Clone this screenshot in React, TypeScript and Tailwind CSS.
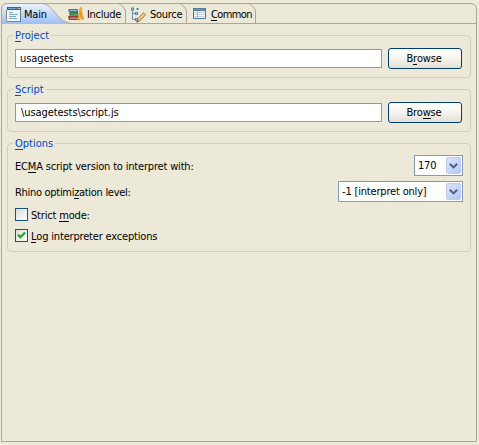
import type { ReactNode } from "react";

function U({ children }: { children: ReactNode }) {
  return <span className="shadow-[0_1px_0_currentColor] inline-block h-[12px] leading-[13px]">{children}</span>;
}

function MainIcon() {
  return (
    <svg width="16" height="16" viewBox="0 0 16 16" shapeRendering="crispEdges">
      <rect x="1" y="0" width="14" height="4" fill="#2f6496" />
      <rect x="2" y="1" width="9" height="1" fill="#6fa0cc" />
      <rect x="12" y="1" width="2" height="1" fill="#e8c878" />
      <rect x="0" y="3" width="15" height="12" fill="#8b8a68" />
      <rect x="1" y="3" width="13" height="11" fill="#f5faff" />
      <rect x="14" y="4" width="1" height="11" fill="#557da8" />
      <path d="M3 5.5h4M3 7.5h9M3 9.5h7M3 11.5h8" stroke="#7ba5d8" />
    </svg>
  );
}

function BooksIcon() {
  return (
    <svg width="16" height="14" viewBox="0 0 16 14">
      <path d="M0 3.5 1 2h9v3H1Z" fill="#3f7ea8" />
      <path d="M2 3.5h7" stroke="#cfe1e8" strokeWidth=".6" />
      <path d="M1 6 2 5h8v3.5H2Z" fill="#347b51" />
      <path d="M3 7.2h7" stroke="#8dbd92" strokeWidth=".6" />
      <path d="M0 9.5 1 8.5h10V13H1Z" fill="#963f36" />
      <path d="M2 11.2h8" stroke="#efb59b" strokeWidth=".9" />
      <path d="m9.8 12 2.4-11.5L14 1l-2 12h-1.5Z" fill="#f6b62c" stroke="#d48a1a" strokeWidth=".6" />
      <path d="m12.2 5 1.4-.6 2 7.6-1.4.8Z" fill="#f2a62c" stroke="#d48a1a" strokeWidth=".6" />
    </svg>
  );
}

function SourceIcon() {
  return (
    <svg width="16" height="16" viewBox="0 0 16 16">
      <path d="M1.5 3v9.5H5M1.5 6.5H5" fill="none" stroke="#6f8eb6" />
      <path d="M0 .5h3v3H0ZM4 5h3v3H4ZM4 11h3v3H4ZM5.5 1h2v2h-2Z" fill="#5a82b4" />
      <path d="M1 1.5h1v1H1ZM5 6h1v1H5ZM5 12h1v1H5Z" fill="#b9cee6" />
      <path d="m7 11.5 5.5-5.8 2.2 2L9 13.7l-3 1.3Z" fill="#e6bd76" stroke="#9a6a34" strokeWidth=".8" />
      <path d="m8 12 5.2-5.3" stroke="#fae5b4" strokeWidth=".8" />
      <path d="m5.5 15.5.8-2 1.3 1.3Z" fill="#4c4540" />
    </svg>
  );
}

function TableIcon() {
  return (
    <svg width="13" height="11" viewBox="0 0 13 11" shapeRendering="crispEdges">
      <rect width="13" height="11" fill="#56779f" />
      <rect x="1" y="1" width="11" height="1" fill="#7592b8" />
      <rect x="1" y="3" width="11" height="7" fill="#fff" />
      <path d="M1 4.5h11M1 6.5h11M1 8.5h11" stroke="#c5d3e6" />
      <path d="M4.5 3v7" stroke="#a9bcd6" />
    </svg>
  );
}

function ActiveShape() {
  return (
    <svg className="absolute -left-px -top-px" width="74" height="22" viewBox="0 0 74 22">
      <defs>
        <linearGradient id="tabfill" x1="0" y1="0" x2="0" y2="1">
          <stop offset="0" stopColor="#eef3fc" />
          <stop offset="1" stopColor="#9dbef8" />
        </linearGradient>
      </defs>
      <path d="M0 21V6Q1 1 6 .5H40C54 .5 55 20.5 72 20.5V21Z" fill="url(#tabfill)" />
      <path d="M.5 21V6Q1 .5 6 .5H40C54 .5 55 20.5 72 20.5" fill="none" stroke="#aca899" />
    </svg>
  );
}

function TabEdge() {
  return (
    <svg className="absolute -top-px right-0" width="9" height="21" viewBox="0 0 9 21">
      <path d="M0 .5H1Q4 1 6 3.5T8.5 8V21" fill="none" stroke="#aca899" />
    </svg>
  );
}

function Group({ title, className, children }: { title: ReactNode; className: string; children: ReactNode }) {
  return (
    <fieldset className={"relative box-border w-[464px] rounded-[4px] border border-[#d0d0bf] " + className}>
      <span className="absolute left-[5px] -top-[7px] h-[14px] bg-[#ece9d8] px-[2px] leading-[13px] tracking-normal text-[#0046d5]">
        {title}
      </span>
      {children}
    </fieldset>
  );
}

function Field({ value, button, pad }: { value: string; button: ReactNode; pad: string }) {
  return (
    <div className="flex items-center pl-[7px] pt-[12px]">
      <div className={"h-[19px] w-[367px] border border-[#7f9db9] bg-white leading-[17px] tracking-[-0.08px] " + pad}>{value}</div>
      <button className="ml-[6px] flex h-[21px] w-[74px] items-center justify-center rounded-[3px] border border-[#003c74] bg-linear-to-b from-white via-[#f5f4ee] to-[#e3dfd3] pb-px pr-[2px]">
        <span>{button}</span>
      </button>
    </div>
  );
}

function Combo({ value, width }: { value: ReactNode; width: string }) {
  return (
    <div className={"flex h-[21px] items-center border border-[#7f9db9] bg-white p-px " + width}>
      <span className="grow pl-[2px]">{value}</span>
      <span className="flex h-[17px] w-[15px] items-center justify-center rounded-[2px] border border-[#bccbf4] bg-linear-to-br from-[#dbe5fe] to-[#b4c8f6]">
        <svg width="9" height="6" viewBox="0 0 9 6">
          <path d="m.8.8 3.7 3.6L8.2.8" fill="none" stroke="#4d6185" strokeWidth="2" />
        </svg>
      </span>
    </div>
  );
}

function Check({ checked, children }: { checked?: boolean; children: ReactNode }) {
  return (
    <div className="flex h-[13px] items-center">
      <span className="flex size-[13px] items-center justify-center border border-[#1c5180] bg-linear-to-br from-[#dcdcd7] to-white">
        {checked && (
          <svg width="9" height="9" viewBox="0 0 9 9">
            <path d="M1 3.7 3.4 6.2 8 1.5" fill="none" stroke="#21a121" strokeWidth="2.2" />
          </svg>
        )}
      </span>
      <span className="ml-[3px] pt-px">{children}</span>
    </div>
  );
}

export default function App() {
  return (
    <div className="h-[445px] w-[479px] overflow-hidden whitespace-nowrap bg-[#ece9d8] pl-px pt-[3px] font-['DejaVu_Sans_Condensed','DejaVu_Sans',sans-serif] text-[11px] leading-[13px] tracking-[-0.18px] text-black [font-stretch:condensed]">
      <div className="h-[439px] w-[476px] rounded-t-[6px] border border-[#aca899]">
        <div className="flex h-[20px] border-b border-[#aca899]">
          <div className="relative flex w-[66px]">
            <ActiveShape />
            <div className="relative flex pl-[4px] pt-[3px]">
              <MainIcon />
              <span className="ml-[2px] mt-px">Main</span>
            </div>
          </div>
          <div className="relative flex w-[58px] pt-[3px]">
            <TabEdge />
            <BooksIcon />
            <span className="ml-[3px] mt-px tracking-[-0.3px]">Include</span>
          </div>
          <div className="relative flex w-[61px] pl-[5px] pt-[3px]">
            <TabEdge />
            <SourceIcon />
            <span className="ml-[3px] mt-px tracking-[-0.3px]">Source</span>
          </div>
          <div className="relative flex w-[69px] pl-[6px] pt-[4px]">
            <TabEdge />
            <TableIcon />
            <span className="ml-[5px] tracking-[-0.6px]"><U>C</U>ommon</span>
          </div>
        </div>
        <div className="flex flex-col pl-[5px] pt-[11px]">
          <Group className="h-[43px]" title={<><U>P</U>roject</>}>
            <Field value="usagetests" pad="pl-[4px]" button={<>B<U>r</U>owse</>} />
          </Group>
          <Group className="mt-[11px] h-[43px]" title={<><U>S</U>cript</>}>
            <Field value="\usagetests\script.js" pad="pl-[5px]" button={<>Bro<U>w</U>se</>} />
          </Group>
          <Group className="mt-[11px] h-[109px]" title={<><U>O</U>ptions</>}>
            <div className="flex flex-col pl-[7px] pr-[7px] pt-[11px]">
              <div className="flex items-center justify-between">
                <span className="pt-px">EC<U>M</U>A script version to interpret with:</span>
                <Combo value="170" width="w-[49px]" />
              </div>
              <div className="mt-[5px] flex items-center justify-between">
                <span className="pt-px tracking-[-0.3px]">Rhino optimi<U>z</U>ation level:</span>
                <Combo value="-1 [interpret only]" width="w-[125px]" />
              </div>
              <div className="mt-[6px] flex flex-col gap-[8px]">
                <Check>Strict <U>m</U>ode:</Check>
                <Check checked><U>L</U>og interpreter exceptions</Check>
              </div>
            </div>
          </Group>
        </div>
      </div>
    </div>
  );
}
